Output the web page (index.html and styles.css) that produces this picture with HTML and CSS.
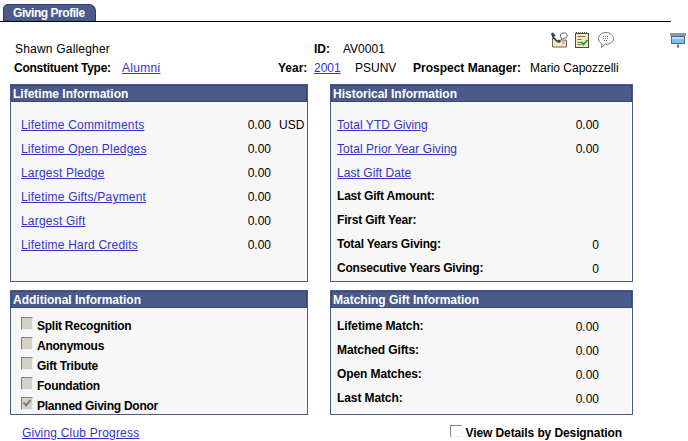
FILE: index.html
```html
<!DOCTYPE html>
<html lang="en">
<head>
  <meta charset="UTF-8" />
  <title>Giving Profile</title>
  <link rel="stylesheet" href="styles.css">
</head>
<body>

  <div class="tabbar">
    <div class="tab">Giving Profile</div>
  </div>

  <div class="summary">
    <div class="icons">
      <svg width="18" height="16" viewBox="0 0 18 16">
        <path d="M2.500 5.500L7 9.500l4-1.500h5.500v7h-14z" fill="#f3e9c4" stroke="#6b6b4a"/>
        <path d="M1 1.500l2-1 2.500 3-1.500 1.500 3.500 3.500 1.500-1 2 2-2 1.500C6 10 2 6 1 1.500z" fill="#33444e"/>
        <path d="M10.500 5V2l1.500-1h3.500l1.500 1v3l-1.500 1h-2l-2 2V6z" fill="#fff" stroke="#6f6f6f"/>
        <rect x="12" y="9" width="3" height="3" fill="#f2a8a8"/>
      </svg>
      <svg class="note" width="14" height="16" viewBox="0 0 14 16">
        <rect x="0.500" y="1.500" width="13" height="14" fill="#f3e9c4" stroke="#4d4d3c"/>
        <path d="M1 0.500h1M3 0.500h1M5 0.500h1M7 0.500h1M9 0.500h1M11 0.500h1" stroke="#555"/>
        <path d="M2.500 4.500h8M2.500 7.500h4M2.500 10.500h4M2.500 12.500h4" stroke="#77775a"/>
        <path d="M6.500 10l2 2.500 4-4.500" stroke="#1d9a3a" stroke-width="1.800" fill="none"/>
      </svg>
      <svg class="bubble" width="16" height="16" viewBox="0 0 16 16">
        <path d="M8 0.500C3.800 0.500 0.500 3.200 0.500 6.700c0 2.500 1.700 4.300 3.500 5L3.500 15.500l3.500-3.300h1c4.200 0 7.500-2.300 7.500-5.500S12.200 0.500 8 0.500z" fill="#fff" stroke="#707070"/>
        <path d="M5 4.500h6M5 6.500h6M6 8.500h4" stroke="#4a62b0" stroke-dasharray="1 1"/>
      </svg>
    </div>
    <div class="name">Shawn Gallegher</div>
    <div class="id-cell"><b>ID:</b><span>AV0001</span></div>
    <b class="type-label">Constituent Type:</b>
    <a class="alumni" href="#">Alumni</a>
    <b>Year:</b>
    <a href="#">2001</a>
    <span>PSUNV</span>
    <b>Prospect Manager:</b>
    <span>Mario Capozzelli</span>
    <svg class="grid-icon" width="16" height="16" viewBox="0 0 16 16">
      <rect x="0" y="1" width="16" height="3" fill="#8d9aa3"/>
      <rect x="1.500" y="4.500" width="13" height="7" fill="#7cc0f0" stroke="#4c6a8a"/>
      <path d="M2 5h12v2H2z" fill="#bfe2fa"/>
      <path d="M8 12v2" stroke="#555"/>
      <circle cx="8" cy="14.500" r="1.300" fill="#777"/>
    </svg>
  </div>

  <div class="panels">
    <section class="panel">
      <h2>Lifetime Information</h2>
      <div class="rows life">
        <a href="#">Lifetime Commitments</a><span class="num">0.00</span><span class="cur">USD</span>
        <a href="#">Lifetime Open Pledges</a><span class="num">0.00</span><span></span>
        <a href="#">Largest Pledge</a><span class="num">0.00</span><span></span>
        <a href="#">Lifetime Gifts/Payment</a><span class="num">0.00</span><span></span>
        <a href="#">Largest Gift</a><span class="num">0.00</span><span></span>
        <a href="#">Lifetime Hard Credits</a><span class="num">0.00</span><span></span>
      </div>
    </section>

    <section class="panel">
      <h2>Historical Information</h2>
      <div class="rows hist">
        <a href="#">Total YTD Giving</a><span class="num">0.00</span>
        <a href="#">Total Prior Year Giving</a><span class="num">0.00</span>
        <a href="#">Last Gift Date</a><span></span>
        <b>Last Gift Amount:</b><span></span>
        <b>First Gift Year:</b><span></span>
        <b>Total Years Giving:</b><span class="num">0</span>
        <b>Consecutive Years Giving:</b><span class="num">0</span>
      </div>
    </section>

    <section class="panel">
      <h2>Additional Information</h2>
      <div class="checks">
        <label><span class="box"></span>Split Recognition</label>
        <label><span class="box"></span>Anonymous</label>
        <label><span class="box"></span>Gift Tribute</label>
        <label><span class="box"></span>Foundation</label>
        <label><span class="box checked">
          <svg width="10" height="10" viewBox="0 0 10 10"><path d="M1.500 4.500l2.500 3L8.500 2" stroke="#808080" stroke-width="2" fill="none"/></svg>
        </span>Planned Giving Donor</label>
      </div>
    </section>

    <section class="panel">
      <h2>Matching Gift Information</h2>
      <div class="rows match">
        <b>Lifetime Match:</b><span class="num">0.00</span>
        <b>Matched Gifts:</b><span class="num">0.00</span>
        <b>Open Matches:</b><span class="num">0.00</span>
        <b>Last Match:</b><span class="num">0.00</span>
      </div>
    </section>
  </div>

  <div class="bottom">
    <a href="#">Giving Club Progress</a>
    <label class="details"><span class="box live"></span>View Details by Designation</label>
  </div>

</body>
</html>
```

FILE: styles.css
```css
body {
  font-family: "Liberation Sans", Arial, sans-serif;
  font-size: 12px;
  margin: 0;
  color: black;
  background: white;
  overflow: hidden;
}

a {
  color: #3333cc;
}

.tabbar {
  display: flex;
  align-items: flex-end;
  width: 671px;
  height: 22px;
  border-bottom: 1px solid black;
  box-sizing: border-box;
  padding-left: 3px;
}

.tab {
  width: 93px;
  height: 17px;
  box-sizing: border-box;
  background: #4a5a8a;
  color: white;
  font-weight: bold;
  letter-spacing: -0.45px;
  line-height: 16px;
  padding-left: 9px;
  border: 1px solid #2f3c66;
  border-bottom: none;
  border-radius: 5px 7px 0 0;
}

.summary {
  display: grid;
  grid-template-columns: 108px 156px 36px 41px 58px 117px 140px 16px;
  grid-template-rows: 20px 14px 20px;
  margin-left: 14px;
  align-items: center;
  height: 62px;
}

.icons {
  grid-column: 7;
  grid-row: 1 / 3;
  display: flex;
  padding-left: 20px;
  padding-top: 10px;
  align-self: start;
}

.note {
  margin-left: 7px;
}

.bubble {
  margin-left: 9px;
}

.name {
  grid-column: 1 / 3;
  grid-row: 2;
  padding-left: 1px;
  letter-spacing: 0.2px;
}

.id-cell {
  grid-column: 4 / 7;
  grid-row: 2;
  display: flex;
  gap: 13px;
}

.type-label {
  grid-column: 1;
  letter-spacing: -0.25px;
}

.alumni {
  letter-spacing: 0.3px;
}

.grid-icon {
  grid-column: 8;
  grid-row: 1 / 3;
  align-self: start;
  margin-top: 10px;
}

.summary > a, .summary > b, .summary > span {
  grid-row: 3;
  padding-top: 3px;
}

.panels {
  display: grid;
  grid-template-columns: 298px 303px;
  grid-template-rows: 198px 125px;
  column-gap: 22px;
  row-gap: 8px;
  margin-left: 10px;
}

.panel {
  background: #f7f7f7;
  border: 1px solid #4a5a8a;
  box-sizing: border-box;
  box-shadow: inset -2px 0 0 white;
}

.panel h2 {
  margin: 0;
  height: 17px;
  background: #4a5a8a;
  border: 1px solid #3a4878;
  box-sizing: border-box;
  color: white;
  font-size: 12px;
  line-height: 16px;
  padding-left: 1px;
}

.rows {
  display: grid;
  grid-auto-rows: 24px;
  align-items: center;
  padding-top: 10px;
}

.rows b {
  letter-spacing: -0.2px;
}

.rows a, .num, .cur {
  padding-top: 2px;
}

.life {
  grid-template-columns: 202px 48px 30px;
  padding-left: 10px;
}

.life a {
  letter-spacing: 0.2px;
}

.hist {
  grid-template-columns: 214px 48px;
  padding-left: 6px;
}

.hist a {
  letter-spacing: 0.06px;
}

.match {
  grid-template-columns: 214px 48px;
  padding-left: 6px;
  padding-top: 6px;
}

.match b {
  letter-spacing: -0.1px;
}

.num {
  text-align: right;
}

.cur {
  padding-left: 8px;
}

.checks {
  display: flex;
  flex-direction: column;
  gap: 7px;
  padding: 11px 0 0 10px;
}

.checks label, .details {
  display: flex;
  align-items: center;
  gap: 4px;
  font-weight: bold;
  letter-spacing: -0.25px;
  height: 13px;
}

.details {
  letter-spacing: -0.1px;
}

.box {
  display: block;
  width: 12px;
  height: 13px;
  margin-bottom: 4px;
  box-sizing: border-box;
  background: #d4d0c8;
  border: 1px solid;
  border-color: #808080 #f0f0f0 #f0f0f0 #808080;
  line-height: 0;
}

.box.live {
  height: 12px;
  margin-bottom: 3px;
  background: white;
}

.bottom {
  display: flex;
  justify-content: space-between;
  width: 600px;
  margin: 11px 0 0 22px;
}

.bottom a {
  letter-spacing: 0.2px;
}
```
